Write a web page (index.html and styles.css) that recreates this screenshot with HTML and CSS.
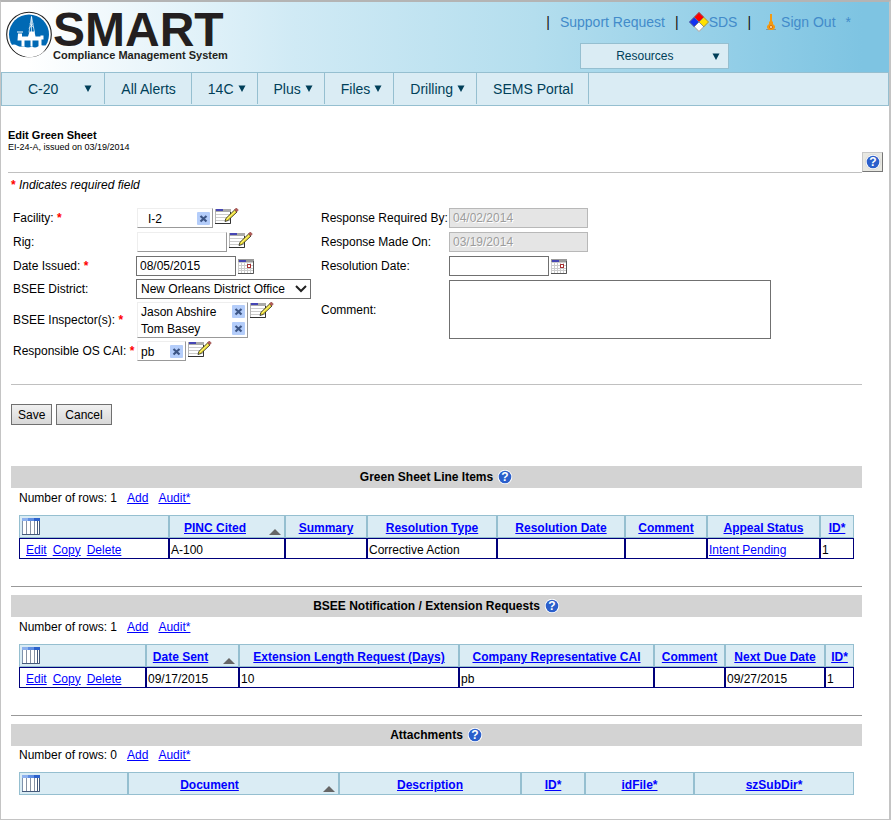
FILE: index.html
```html
<!DOCTYPE html>
<html lang="en">
<head>
    <meta charset="UTF-8">
    <meta name="viewport" content="width=device-width, initial-scale=1.0">
    <title>Edit Green Sheet</title>
    <link rel="stylesheet" href="styles.css">
</head>
<body>
    <!-- Shared icons -->
    <svg class="sprite" aria-hidden="true">
        <symbol id="icon-help" viewBox="0 0 16 16">
            <circle cx="8" cy="8" r="7.6" fill="#fff" stroke="#c4c4c4" stroke-width="0.5"/>
            <circle cx="8" cy="8" r="6.3" fill="#2b5fcb"/>
            <text x="8" y="12.4" text-anchor="middle" font-family="Liberation Sans, Arial, sans-serif" font-weight="bold" font-size="12" fill="#fff">?</text>
        </symbol>
        <symbol id="icon-edit" viewBox="0 0 24 17">
            <rect x="0.5" y="1.5" width="15" height="14" fill="#fff" stroke="#b5b5b5"/>
            <path d="M1 6.5h14M1 9.5h14M1 12.5h14" stroke="#ccc"/>
            <rect x="0" y="1" width="16" height="3" fill="#aaa"/>
            <rect x="1" y="1" width="7" height="2" fill="#4646b4"/>
            <path d="M0 15.5h15.5V4" fill="none" stroke="#333"/>
            <path d="M19.500 2l2.500 2L13 12.500l-3 1 .8-3z" fill="#f0e030" stroke="#222" stroke-width="0.8"/>
            <path d="M12 11l8-7.500" stroke="#fff79a" stroke-width="0.8"/>
            <path d="M19.500 1.800L21.300 0l2 2-1.500 1.800z" fill="#b55a55" stroke="#8c4545" stroke-width="0.6"/>
        </symbol>
        <symbol id="icon-calendar" viewBox="0 0 16 15">
            <rect x="0" y="0" width="16" height="15" fill="#ccc"/>
            <path fill="#fff" d="M1 4h2v2H1zM4 4h2v2H4zM7 4h2v2H7zM10 4h2v2h-2zM13 4h2v2h-2zM1 7h2v2H1zM4 7h2v2H4zM7 7h2v2H7zM13 7h2v2h-2zM1 10h2v1H1zM4 10h2v1H4zM7 10h2v1H7zM10 10h2v1h-2zM13 10h2v1h-2zM1 12h2v2H1zM4 12h2v2H4zM7 12h2v2H7zM10 12h2v2h-2zM13 12h2v2h-2z"/>
            <rect x="0" y="0" width="16" height="3" fill="#999"/>
            <rect x="1" y="1" width="7" height="2" fill="#4646b4"/>
            <rect x="9.5" y="5.5" width="3" height="3" fill="#fff" stroke="#a83232"/>
            <path d="M0 14.5h15.5V2" fill="none" stroke="#555"/>
        </symbol>
        <symbol id="icon-columns" viewBox="0 0 18 17">
            <rect x="0.5" y="0.5" width="17" height="16" fill="#fff" stroke="#7f93ad"/>
            <rect x="0" y="0" width="6" height="3" fill="#8db1ee"/>
            <rect x="6" y="0" width="6" height="3" fill="#5f8ee2"/>
            <rect x="12" y="0" width="6" height="3" fill="#2c62cc"/>
            <path d="M4.5 3v13M8.5 3v13M12.5 3v13" stroke="#8792a3"/>
            <path d="M15.5 3v13M0 16.5h17.5V3" fill="none" stroke="#44597a"/>
        </symbol>
        <symbol id="icon-remove" viewBox="0 0 13 13">
            <rect width="13" height="13" rx="1" fill="#b4cdfa"/>
            <path d="M3.5 4l6 5.5M9.5 4l-6 5.5" stroke="#3c5585" stroke-width="2.2"/>
        </symbol>
        <symbol id="icon-down" viewBox="0 0 8 7">
            <path d="M0.500 0.500h7L4 7z" fill="#003f59"/>
        </symbol>
        <symbol id="icon-sort" viewBox="0 0 12 6">
            <path d="M6 0l6 6H0z" fill="#666"/>
        </symbol>
    </svg>

    <div class="page">
        <header class="header">
            <a class="logo" href="#">
                <svg class="logo-mark" viewBox="0 0 46 46" aria-hidden="true">
                    <circle cx="23" cy="23" r="22.3" fill="#fff" stroke="#222" stroke-width="1.1"/>
                    <circle cx="23" cy="23" r="20" fill="#0069b4"/>
                    <path d="M5 34q3-2 6 0 3 2 7 1 4 2 8 0 3 2 6 0 3-2 5-1l4 0q-3 9-12 11-7 2-13-1-8-3-11-10z" fill="#fff"/>
                    <path d="M12 22h4v3h6l1.500-5h5l1 5h5v-1h3v4h-2v7h-3v-6h-6v6h-2v-6h-6v6h-3v-6h-4zM11 20h6v1h-6z" fill="#fff"/>
                    <path d="M25.500 5L23 21M25.500 5L28.500 21M24 12l3.500 4M27 12l-4 5M25.500 5v16" fill="none" stroke="#fff" stroke-width="0.7"/>
                </svg>
                <span class="logo-text">
                    <span class="logo-name">SMART</span>
                    <span class="logo-tagline">Compliance Management System</span>
                </span>
            </a>
            <div class="header-tools">
                <div class="header-links">
                    <span class="bar">|</span>
                    <a href="#">Support Request</a>
                    <span class="bar">|</span>
                    <a class="icon-link" href="#">
                        <svg class="sds-icon" viewBox="0 0 20 20" aria-hidden="true">
                            <path d="M10 0l5 5-5 5-5-5z" fill="#f00"/>
                            <path d="M5 5l5 5-5 5-5-5z" fill="#1432f0"/>
                            <path d="M15 5l5 5-5 5-5-5z" fill="#ffe100"/>
                            <path d="M10 10l5 5-5 5-5-5z" fill="#fff"/>
                            <path d="M10 .5l9.500 9.500-9.500 9.500L.5 10zM5 5l10 10M15 5L5 15" fill="none" stroke="#777" stroke-width="0.8"/>
                        </svg>SDS</a>
                    <span class="bar">|</span>
                    <a class="icon-link signout" href="#">
                        <svg class="signout-icon" viewBox="0 0 10 16" aria-hidden="true">
                            <path d="M0 15.500h10" stroke="#8797a0"/>
                            <path d="M4 0h2v7l1 1v2l2 2v2l-2 2H3l-2-2v-2l2-2V8l1-1z" fill="#f39a12"/>
                            <circle cx="5" cy="13" r="1.500" fill="#fff2cf" stroke="#d66d08"/>
                        </svg>Sign Out</a>
                    <a href="#">*</a>
                </div>
                <button class="resources" type="button">
                    <span>Resources</span>
                    <svg class="icon-down" aria-hidden="true"><use href="#icon-down"/></svg>
                </button>
            </div>
        </header>

        <nav class="nav">
            <a class="nav-platform" href="#">C-20 <svg class="icon-down" aria-hidden="true"><use href="#icon-down"/></svg></a>
            <a href="#">All Alerts</a>
            <a class="has-menu" href="#">14C <svg class="icon-down" aria-hidden="true"><use href="#icon-down"/></svg></a>
            <a class="has-menu" href="#">Plus <svg class="icon-down" aria-hidden="true"><use href="#icon-down"/></svg></a>
            <a class="has-menu" href="#">Files <svg class="icon-down" aria-hidden="true"><use href="#icon-down"/></svg></a>
            <a class="has-menu" href="#">Drilling <svg class="icon-down" aria-hidden="true"><use href="#icon-down"/></svg></a>
            <a href="#">SEMS Portal</a>
        </nav>

        <main>
            <div class="title-row">
                <div class="title">
                    <h1>Edit Green Sheet</h1>
                    <p>EI-24-A, issued on 03/19/2014</p>
                </div>
                <button class="help-button" type="button" aria-label="Help">
                    <svg class="icon-help" aria-hidden="true"><use href="#icon-help"/></svg>
                </button>
            </div>

            <form class="sheet-form">
                <p class="required-note"><span class="req">*</span> Indicates required field</p>
                <div class="form-columns">
                    <div class="form-left">
                        <div class="rows">
                            <div class="row">
                                <span class="label">Facility: <span class="req">*</span></span>
                                <div class="picker picker-facility">
                                    <div class="picked"><span>I-2</span><button type="button" aria-label="Remove I-2"><svg class="icon-remove"><use href="#icon-remove"/></svg></button></div>
                                </div>
                                <button class="icon-button" type="button" aria-label="Choose facility"><svg class="icon-edit"><use href="#icon-edit"/></svg></button>
                            </div>
                            <div class="row">
                                <span class="label">Rig:</span>
                                <div class="picker picker-rig"></div>
                                <button class="icon-button" type="button" aria-label="Choose rig"><svg class="icon-edit"><use href="#icon-edit"/></svg></button>
                            </div>
                            <div class="row">
                                <label class="label" for="dateIssued">Date Issued: <span class="req">*</span></label>
                                <input class="date" type="text" id="dateIssued" value="08/05/2015">
                                <button class="icon-button middle" type="button" aria-label="Pick date issued"><svg class="icon-calendar"><use href="#icon-calendar"/></svg></button>
                            </div>
                        </div>
                        <div class="rows rows-tight">
                            <div class="row">
                                <label class="label" for="district">BSEE District:</label>
                                <select id="district">
                                    <option>New Orleans District Office</option>
                                </select>
                            </div>
                            <div class="row">
                                <span class="label">BSEE Inspector(s): <span class="req">*</span></span>
                                <div class="picker picker-inspectors">
                                    <div class="picked"><span>Jason Abshire</span><button type="button" aria-label="Remove Jason Abshire"><svg class="icon-remove"><use href="#icon-remove"/></svg></button></div>
                                    <div class="picked"><span>Tom Basey</span><button type="button" aria-label="Remove Tom Basey"><svg class="icon-remove"><use href="#icon-remove"/></svg></button></div>
                                </div>
                                <button class="icon-button" type="button" aria-label="Choose inspectors"><svg class="icon-edit"><use href="#icon-edit"/></svg></button>
                            </div>
                            <div class="row">
                                <span class="label">Responsible OS CAI: <span class="req">*</span></span>
                                <div class="picker picker-cai">
                                    <div class="picked"><span>pb</span><button type="button" aria-label="Remove pb"><svg class="icon-remove"><use href="#icon-remove"/></svg></button></div>
                                </div>
                                <button class="icon-button" type="button" aria-label="Choose responsible person"><svg class="icon-edit"><use href="#icon-edit"/></svg></button>
                            </div>
                        </div>
                    </div>
                    <div class="form-right rows">
                        <div class="row">
                            <label class="label" for="responseRequired">Response Required By:</label>
                            <input class="wide-date" type="text" id="responseRequired" value="04/02/2014" disabled>
                        </div>
                        <div class="row">
                            <label class="label" for="responseMade">Response Made On:</label>
                            <input class="wide-date" type="text" id="responseMade" value="03/19/2014" disabled>
                        </div>
                        <div class="row">
                            <label class="label" for="resolutionDate">Resolution Date:</label>
                            <input class="date" type="text" id="resolutionDate">
                            <button class="icon-button middle" type="button" aria-label="Pick resolution date"><svg class="icon-calendar"><use href="#icon-calendar"/></svg></button>
                        </div>
                        <div class="row">
                            <label class="label" for="comment">Comment:</label>
                            <textarea id="comment"></textarea>
                        </div>
                    </div>
                </div>
                <div class="actions">
                    <button type="submit">Save</button>
                    <button type="button">Cancel</button>
                </div>
            </form>

            <section class="grid-section">
                <h2>Green Sheet Line Items <svg class="icon-help" aria-hidden="true"><use href="#icon-help"/></svg></h2>
                <div class="grid-tools"><span>Number of rows: 1</span><a href="#">Add</a><a href="#">Audit*</a></div>
                <table class="line-items">
                    <colgroup><col class="c-actions"><col class="c-pinc"><col class="c-summary"><col class="c-type"><col class="c-date"><col class="c-comment"><col class="c-appeal"><col class="c-id"></colgroup>
                    <thead>
                        <tr>
                            <th class="menu"><svg class="icon-columns"><use href="#icon-columns"/></svg></th>
                            <th><div class="sorted"><a href="#">PINC Cited</a><svg class="icon-sort"><use href="#icon-sort"/></svg></div></th>
                            <th><a href="#">Summary</a></th>
                            <th><a href="#">Resolution Type</a></th>
                            <th><a href="#">Resolution Date</a></th>
                            <th><a href="#">Comment</a></th>
                            <th><a href="#">Appeal Status</a></th>
                            <th><a href="#">ID*</a></th>
                        </tr>
                    </thead>
                    <tbody>
                        <tr>
                            <td><div class="row-links"><a href="#">Edit</a><a href="#">Copy</a><a href="#">Delete</a></div></td>
                            <td>A-100</td>
                            <td></td>
                            <td>Corrective Action</td>
                            <td></td>
                            <td></td>
                            <td><a href="#">Intent Pending</a></td>
                            <td>1</td>
                        </tr>
                    </tbody>
                </table>
            </section>

            <section class="grid-section">
                <h2>BSEE Notification / Extension Requests <svg class="icon-help" aria-hidden="true"><use href="#icon-help"/></svg></h2>
                <div class="grid-tools"><span>Number of rows: 1</span><a href="#">Add</a><a href="#">Audit*</a></div>
                <table class="extensions">
                    <colgroup><col class="c-actions"><col class="c-sent"><col class="c-length"><col class="c-rep"><col class="c-comment"><col class="c-due"><col class="c-id"></colgroup>
                    <thead>
                        <tr>
                            <th class="menu"><svg class="icon-columns"><use href="#icon-columns"/></svg></th>
                            <th><div class="sorted"><a href="#">Date Sent</a><svg class="icon-sort"><use href="#icon-sort"/></svg></div></th>
                            <th><a href="#">Extension Length Request (Days)</a></th>
                            <th><a href="#">Company Representative CAI</a></th>
                            <th><a href="#">Comment</a></th>
                            <th><a href="#">Next Due Date</a></th>
                            <th><a href="#">ID*</a></th>
                        </tr>
                    </thead>
                    <tbody>
                        <tr>
                            <td><div class="row-links"><a href="#">Edit</a><a href="#">Copy</a><a href="#">Delete</a></div></td>
                            <td>09/17/2015</td>
                            <td>10</td>
                            <td>pb</td>
                            <td></td>
                            <td>09/27/2015</td>
                            <td>1</td>
                        </tr>
                    </tbody>
                </table>
            </section>

            <section class="grid-section">
                <h2>Attachments <svg class="icon-help" aria-hidden="true"><use href="#icon-help"/></svg></h2>
                <div class="grid-tools"><span>Number of rows: 0</span><a href="#">Add</a><a href="#">Audit*</a></div>
                <table class="attachments">
                    <colgroup><col class="c-actions"><col class="c-document"><col class="c-description"><col class="c-id"><col class="c-file"><col class="c-subdir"></colgroup>
                    <thead>
                        <tr>
                            <th class="menu"><svg class="icon-columns"><use href="#icon-columns"/></svg></th>
                            <th><div class="sorted sorted-wide"><a href="#">Document</a><svg class="icon-sort"><use href="#icon-sort"/></svg></div></th>
                            <th><a href="#">Description</a></th>
                            <th><a href="#">ID*</a></th>
                            <th><a href="#">idFile*</a></th>
                            <th><a href="#">szSubDir*</a></th>
                        </tr>
                    </thead>
                </table>
            </section>
        </main>
    </div>
</body>
</html>
```
FILE: styles.css
```css
/* General */
* {
    box-sizing: border-box;
}

body {
    margin: 0;
    background: #fff;
    color: #000;
    font-family: "Liberation Sans", Arial, sans-serif;
    font-size: 12px;
    line-height: 16px;
}

h1, h2, p {
    margin: 0;
}

a {
    color: #0000ff;
}

button, input, select, textarea {
    font: inherit;
    color: inherit;
    margin: 0;
    border-radius: 0;
}

svg {
    display: block;
    flex: none;
}

.sprite {
    display: none;
}

.page {
    min-height: 100vh;
    border: solid #c4c4c4;
    border-width: 2px 2px 1px 1px;
    border-top-color: #b4b4b4;
}

.icon-down {
    width: 8px;
    height: 7px;
}

.icon-help {
    width: 16px;
    height: 16px;
}

/* Header */
.header {
    display: flex;
    justify-content: space-between;
    height: 70px;
    background: linear-gradient(to right, #fff 3%, #d0eaf5 33%, #b4deee 60%, #96d0e8 80%, #7ec4e2 97%);
}

.logo {
    display: flex;
    gap: 1px;
    padding: 9px 0 0 5px;
    color: #231f20;
    text-decoration: none;
}

.logo-mark {
    width: 46px;
    height: 47px;
}

.logo-text {
    display: flex;
    flex-direction: column;
    font-weight: bold;
}

.logo-name {
    font-size: 48px;
    line-height: 38px;
}

.logo-tagline {
    font-size: 11px;
    line-height: 12px;
}

.header-tools {
    display: flex;
    flex-direction: column;
    padding: 10px 38px 0 0;
}

.header-links {
    display: flex;
    align-items: center;
    gap: 10px;
    height: 20px;
    font-size: 14px;
}

.header-links a {
    color: #428bca;
    text-decoration: none;
}

.bar {
    color: #111;
}

.icon-link {
    display: flex;
    align-items: center;
}

.signout {
    gap: 5px;
    padding-left: 5px;
}

.sds-icon {
    width: 20px;
    height: 20px;
}

.signout-icon {
    width: 10px;
    height: 16px;
}

.resources {
    display: flex;
    align-items: center;
    justify-content: space-between;
    align-self: center;
    width: 149px;
    height: 26px;
    margin: 11px 88px 0 0;
    padding: 0 8px 0 35px;
    border: 1px solid #95bfd0;
    background: #daecf4;
    color: #003f59;
}

/* Navigation */
.nav {
    display: flex;
    height: 34px;
    padding-bottom: 1px;
    border: 1px solid #95bfd0;
    background: #daecf4;
}

.nav a {
    display: flex;
    align-items: center;
    padding: 0 15px 0 16px;
    border-right: 1px solid #95bfd0;
    color: #003f59;
    font-size: 14px;
    text-decoration: none;
}

.nav .has-menu {
    gap: 4px;
    padding-right: 11px;
}

.nav .nav-platform {
    gap: 26px;
    padding: 0 12px 0 26px;
}

/* Page title */
.title-row {
    display: flex;
    justify-content: space-between;
    padding: 23px 6px 0 7px;
}

.title {
    flex: 1;
    height: 44px;
    border-bottom: 1px solid #c0c0c0;
}

.title h1 {
    font-size: 11px;
    line-height: 13px;
}

.title p {
    font-size: 9px;
    line-height: 11px;
}

.help-button {
    display: flex;
    align-items: center;
    justify-content: center;
    width: 21px;
    height: 20px;
    margin-top: 23px;
    padding: 0;
    border: 1px solid #c8c8c8;
    border-right-color: #777;
    border-bottom-color: #777;
    background: #e8e8e2;
}

/* Form */
.sheet-form {
    padding: 4px 27px 0 10px;
}

.required-note {
    font-style: italic;
}

.req {
    color: #f00;
    font-style: normal;
    font-weight: bold;
}

.form-columns {
    display: flex;
    margin-top: 15px;
    padding-bottom: 23px;
    border-bottom: 1px solid #c0c0c0;
}

.form-left {
    width: 310px;
    padding-left: 2px;
}

.form-right {
    flex: 1;
}

.rows {
    display: flex;
    flex-direction: column;
    gap: 4px;
}

.rows-tight {
    gap: 3px;
    margin-top: 3px;
}

.row {
    display: flex;
    align-items: center;
    min-height: 20px;
}

.label {
    width: 123px;
    white-space: nowrap;
}

.form-right .label {
    width: 128px;
}

.row input, .row select, .row textarea {
    border: 1px solid #707070;
    background: #fff;
}

.row input {
    height: 20px;
    padding: 0 3px;
}

.date {
    width: 100px;
}

.row .wide-date {
    width: 139px;
}

.row input:disabled {
    border-color: #b8b8b8;
    background: #e5e5e5;
    color: #9c9c9c;
    text-shadow: 1px 1px #fff;
}

.row select {
    width: 175px;
    height: 20px;
    padding: 0 4px;
    appearance: none;
    background: #fff url("data:image/svg+xml,%3Csvg xmlns='http://www.w3.org/2000/svg' width='12' height='8'%3E%3Cpath d='M1 1l5 5 5-5' fill='none' stroke='%23222' stroke-width='2'/%3E%3C/svg%3E") no-repeat right 3px center;
}

.row textarea {
    width: 322px;
    height: 59px;
    resize: none;
}

/* Boxes that hold the picked names */
.picker {
    min-height: 20px;
    margin-left: 1px;
    padding: 1px 2px 0 3px;
    border: 1px solid #eee;
    border-right-color: #999;
    border-bottom-color: #999;
}

.picker-facility {
    width: 76px;
    padding-left: 10px;
}

.picker-rig {
    width: 90px;
}

.picker-inspectors {
    width: 111px;
    padding-top: 0;
}

.picker-cai {
    width: 49px;
}

.picked {
    display: flex;
    align-items: center;
    justify-content: space-between;
    height: 17px;
}

.picked button, .icon-button {
    padding: 0;
    border: 0;
    background: none;
}

.icon-button {
    align-self: flex-start;
    margin-left: 2px;
}

.middle {
    align-self: center;
}

.icon-remove {
    width: 13px;
    height: 13px;
}

.icon-edit {
    width: 24px;
    height: 17px;
}

.icon-calendar {
    width: 16px;
    height: 15px;
}

.actions {
    display: flex;
    gap: 4px;
    padding: 19px 0 41px;
}

.actions button {
    height: 21px;
    padding: 0 6px;
    border: 1px solid #707070;
    background: linear-gradient(#f0f0f0, #d8d8d8);
}

.actions button + button {
    padding: 0 8px;
}

/* Data grids */
.grid-section {
    margin: 0 27px 8px 10px;
    padding-bottom: 27px;
    border-bottom: 1px solid #999;
}

.grid-section:last-child {
    margin-bottom: 0;
    padding-bottom: 22px;
    border-bottom: 0;
}

.grid-section h2 {
    display: flex;
    align-items: center;
    justify-content: center;
    gap: 4px;
    height: 22px;
    background: #d3d3d3;
    font-size: 12px;
}

.grid-tools {
    display: flex;
    gap: 10px;
    padding: 2px 8px 9px;
}

.grid-section:last-child .grid-tools {
    padding-top: 1px;
}

.grid-section table {
    width: calc(100% - 16px);
    margin-left: 8px;
    border-spacing: 0;
    table-layout: fixed;
}

th, td {
    height: 21px;
    padding: 2px 1px 0;
    border: 1px solid #00007b;
    line-height: 16px;
    text-align: left;
}

th {
    height: 23px;
    padding-top: 3px;
    border-color: #95bfd0;
    background: #daecf4;
    text-align: center;
}

th.menu {
    padding: 0 2px;
}

.sorted {
    display: flex;
    align-items: flex-end;
    justify-content: space-between;
    padding-right: 2px;
}

.sorted a {
    flex: 1;
    margin-right: 10px;
}

.sorted-wide a {
    margin-right: 34px;
}

.row-links {
    display: flex;
    gap: 6px;
    padding-left: 5px;
}

.icon-columns {
    width: 18px;
    height: 17px;
}

.icon-sort {
    width: 12px;
    height: 6px;
    margin-bottom: 1px;
}

/* Column widths */
.line-items .c-actions { width: 150px; }
.line-items .c-pinc { width: 116px; }
.line-items .c-summary { width: 82px; }
.line-items .c-type { width: 130px; }
.line-items .c-date { width: 128px; }
.line-items .c-comment { width: 82px; }
.line-items .c-appeal { width: 113px; }
.line-items .c-id { width: 34px; }

.extensions .c-actions { width: 127px; }
.extensions .c-sent { width: 93px; }
.extensions .c-length { width: 220px; }
.extensions .c-rep { width: 195px; }
.extensions .c-comment { width: 71px; }
.extensions .c-due { width: 100px; }
.extensions .c-id { width: 29px; }

.attachments .c-actions { width: 109px; }
.attachments .c-document { width: 211px; }
.attachments .c-description { width: 182px; }
.attachments .c-id { width: 64px; }
.attachments .c-file { width: 109px; }
.attachments .c-subdir { width: 160px; }
```
